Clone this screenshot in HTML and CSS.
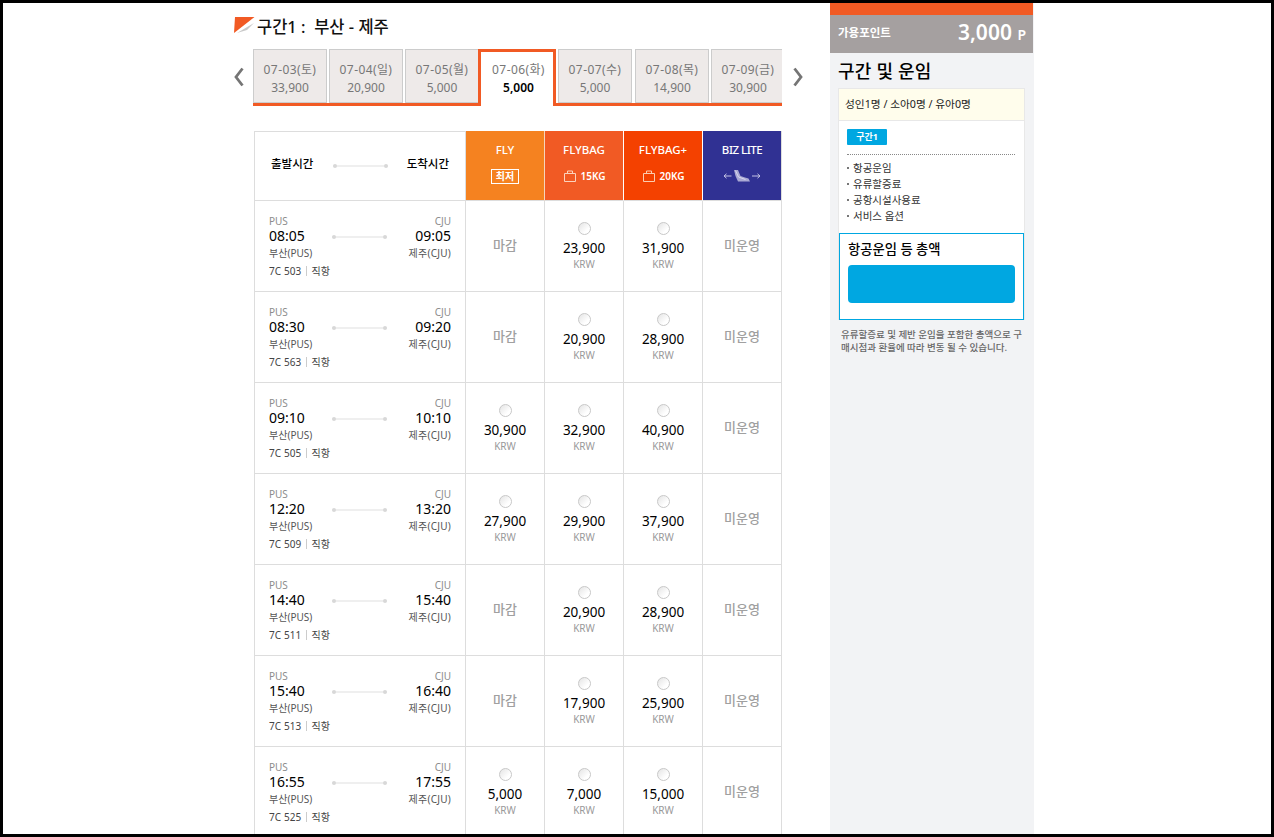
FILE: index.html
```html
<!DOCTYPE html>
<html lang="ko">
<head>
<meta charset="utf-8">
<title>구간 선택</title>
<link rel="stylesheet" href="styles.css">
</head>
<body>
<div class="page">
  <main class="main">
    <h2 class="title">
      <svg class="flag" width="21" height="17" viewBox="0 0 21 17"><polygon points="20,6 3,16 13,13" fill="#c9c9c9"/><polygon points="1,0 20.5,0 0,16" fill="#f15a24"/></svg>
      <span class="title-text">구간1 :  부산 - 제주</span>
    </h2>
    <div class="date-row">
      <svg class="arrow" width="10" height="20" viewBox="0 0 10 20"><path d="M8.5 1.5 2 10l6.500 8.500" fill="none" stroke="#757575" stroke-width="2.800"/></svg>
      <div class="tabs">
        <div class="tab"><span class="date">07-03(토)</span><span>33,900</span></div>
        <div class="tab"><span class="date">07-04(일)</span><span>20,900</span></div>
        <div class="tab"><span class="date">07-05(월)</span><span>5,000</span></div>
        <div class="tab active"><span class="date">07-06(화)</span><b>5,000</b></div>
        <div class="tab"><span class="date">07-07(수)</span><span>5,000</span></div>
        <div class="tab shifted"><span class="date">07-08(목)</span><span>14,900</span></div>
        <div class="tab"><span class="date">07-09(금)</span><span>30,900</span></div>
      </div>
      <svg class="arrow next" width="10" height="20" viewBox="0 0 10 20"><path d="M1.500 1.500 8 10l-6.500 8.500" fill="none" stroke="#757575" stroke-width="2.800"/></svg>
    </div>
    <table class="flights">
      <colgroup><col class="c-flight"><col class="c-fare"><col class="c-fare"><col class="c-fare"><col class="c-fare"></colgroup>
      <thead>
        <tr>
          <th class="head-time"><div class="head-time-in"><span>출발시간</span><i class="line"></i><span>도착시간</span></div></th>
          <th class="fly"><div class="fare-name">FLY</div><div class="fare-sub"><span class="lowest">최저</span></div></th>
          <th class="flybag"><div class="fare-name">FLYBAG</div><div class="fare-sub"><svg class="bag" width="12" height="12" viewBox="0 0 12 12"><path d="M.5 3.500h11v8H.5zM3.500 3.500V1h5v2.500" fill="none" stroke="#fbd3bd"/></svg>15KG</div></th>
          <th class="flybagplus"><div class="fare-name">FLYBAG+</div><div class="fare-sub"><svg class="bag" width="12" height="12" viewBox="0 0 12 12"><path d="M.5 3.500h11v8H.5zM3.500 3.500V1h5v2.500" fill="none" stroke="#fbcdb0"/></svg>20KG</div></th>
          <th class="biz"><div class="fare-name biz-name">BIZ LITE</div><div class="fare-sub"><svg width="38" height="14" viewBox="0 0 38 14"><path d="M1 7h7.500M1 7l2.500-2.200M1 7l2.500 2.200M29 7h8M37 7l-2.500-2.200M37 7l-2.500 2.200" fill="none" stroke="#c3c3e4"/><path d="M11 1h4l2.500 6 4.500 1.500 3.500 1 1.500 3H15l-2.500-5.500z" fill="#a9a9d4"/><path d="M12.500 1.500 15.500 8l7 2.500" fill="none" stroke="#d8d8ee"/></svg></div></th>
        </tr>
      </thead>
      <tbody>
        <tr>
          <td><div class="flight"><span class="code">PUS</span><span></span><span class="code r">CJU</span><span class="time">08:05</span><i class="line"></i><span class="time r">09:05</span><span class="city">부산(PUS)</span><span></span><span class="city r">제주(CJU)</span></div><div class="no">7C 503<i></i>직항</div></td>
          <td class="na">마감</td>
          <td class="fare"><i class="radio"></i><div class="price">23,900</div><div class="cur">KRW</div></td>
          <td class="fare"><i class="radio"></i><div class="price">31,900</div><div class="cur">KRW</div></td>
          <td class="na">미운영</td>
        </tr>
        <tr>
          <td><div class="flight"><span class="code">PUS</span><span></span><span class="code r">CJU</span><span class="time">08:30</span><i class="line"></i><span class="time r">09:20</span><span class="city">부산(PUS)</span><span></span><span class="city r">제주(CJU)</span></div><div class="no">7C 563<i></i>직항</div></td>
          <td class="na">마감</td>
          <td class="fare"><i class="radio"></i><div class="price">20,900</div><div class="cur">KRW</div></td>
          <td class="fare"><i class="radio"></i><div class="price">28,900</div><div class="cur">KRW</div></td>
          <td class="na">미운영</td>
        </tr>
        <tr>
          <td><div class="flight"><span class="code">PUS</span><span></span><span class="code r">CJU</span><span class="time">09:10</span><i class="line"></i><span class="time r">10:10</span><span class="city">부산(PUS)</span><span></span><span class="city r">제주(CJU)</span></div><div class="no">7C 505<i></i>직항</div></td>
          <td class="fare"><i class="radio"></i><div class="price">30,900</div><div class="cur">KRW</div></td>
          <td class="fare"><i class="radio"></i><div class="price">32,900</div><div class="cur">KRW</div></td>
          <td class="fare"><i class="radio"></i><div class="price">40,900</div><div class="cur">KRW</div></td>
          <td class="na">미운영</td>
        </tr>
        <tr>
          <td><div class="flight"><span class="code">PUS</span><span></span><span class="code r">CJU</span><span class="time">12:20</span><i class="line"></i><span class="time r">13:20</span><span class="city">부산(PUS)</span><span></span><span class="city r">제주(CJU)</span></div><div class="no">7C 509<i></i>직항</div></td>
          <td class="fare"><i class="radio"></i><div class="price">27,900</div><div class="cur">KRW</div></td>
          <td class="fare"><i class="radio"></i><div class="price">29,900</div><div class="cur">KRW</div></td>
          <td class="fare"><i class="radio"></i><div class="price">37,900</div><div class="cur">KRW</div></td>
          <td class="na">미운영</td>
        </tr>
        <tr>
          <td><div class="flight"><span class="code">PUS</span><span></span><span class="code r">CJU</span><span class="time">14:40</span><i class="line"></i><span class="time r">15:40</span><span class="city">부산(PUS)</span><span></span><span class="city r">제주(CJU)</span></div><div class="no">7C 511<i></i>직항</div></td>
          <td class="na">마감</td>
          <td class="fare"><i class="radio"></i><div class="price">20,900</div><div class="cur">KRW</div></td>
          <td class="fare"><i class="radio"></i><div class="price">28,900</div><div class="cur">KRW</div></td>
          <td class="na">미운영</td>
        </tr>
        <tr>
          <td><div class="flight"><span class="code">PUS</span><span></span><span class="code r">CJU</span><span class="time">15:40</span><i class="line"></i><span class="time r">16:40</span><span class="city">부산(PUS)</span><span></span><span class="city r">제주(CJU)</span></div><div class="no">7C 513<i></i>직항</div></td>
          <td class="na">마감</td>
          <td class="fare"><i class="radio"></i><div class="price">17,900</div><div class="cur">KRW</div></td>
          <td class="fare"><i class="radio"></i><div class="price">25,900</div><div class="cur">KRW</div></td>
          <td class="na">미운영</td>
        </tr>
        <tr>
          <td><div class="flight"><span class="code">PUS</span><span></span><span class="code r">CJU</span><span class="time">16:55</span><i class="line"></i><span class="time r">17:55</span><span class="city">부산(PUS)</span><span></span><span class="city r">제주(CJU)</span></div><div class="no">7C 525<i></i>직항</div></td>
          <td class="fare"><i class="radio"></i><div class="price">5,000</div><div class="cur">KRW</div></td>
          <td class="fare"><i class="radio"></i><div class="price">7,000</div><div class="cur">KRW</div></td>
          <td class="fare"><i class="radio"></i><div class="price">15,000</div><div class="cur">KRW</div></td>
          <td class="na">미운영</td>
        </tr>
      </tbody>
    </table>
  </main>
  <aside class="side">
    <div class="side-top"></div>
    <div class="points"><span class="points-label">가용포인트</span><span class="points-value">3,000 <small>P</small></span></div>
    <h3 class="side-title">구간 및 운임</h3>
    <div class="summary">
      <div class="pax">성인1명 / 소아0명 / 유아0명</div>
      <div class="detail">
        <span class="badge">구간1</span>
        <ul class="items">
          <li>항공운임</li>
          <li>유류할증료</li>
          <li>공항시설사용료</li>
          <li>서비스 옵션</li>
        </ul>
      </div>
      <div class="total">
        <div class="total-label">항공운임 등 총액</div>
        <div class="total-bar"></div>
      </div>
    </div>
    <p class="note">유류할증료 및 제반 운임을 포함한 총액으로 구매시점과 환율에 따라 변동 될 수 있습니다.</p>
  </aside>
</div>
</body>
</html>
```

FILE: styles.css
```css
* { box-sizing: border-box; }
html, body { margin: 0; padding: 0; background: #fff; }
body { font-family: "Noto Sans", "Noto Sans CJK KR", sans-serif; color: #000; }
i { font-style: normal; }

.page {
  width: 1274px;
  height: 837px;
  border: 3px solid #000;
  padding-left: 231px;
  display: flex;
  overflow: hidden;
  background: #fff;
}
.main { width: 596px; flex: none; }

.title {
  margin: 0;
  padding-top: 12px;
  height: 36px;
  display: flex;
  align-items: center;
  font-size: 16.500px;
  line-height: 24px;
  font-weight: 500;
  color: #111;
}
.title-text { white-space: pre; }
.flag { margin: -4px 2px 0 0; flex: none; }

.date-row {
  margin-top: 10px;
  display: flex;
  align-items: center;
  height: 57px;
}
.arrow { flex: none; display: block; margin-top: -2px; }
.arrow.next { margin-left: 11px; }
.tabs {
  margin-left: 9px;
  width: 529px;
  height: 57px;
  flex: none;
  display: flex;
  gap: 2px;
  align-items: flex-start;
  overflow: hidden;
  background: linear-gradient(#f15a24, #f15a24) left bottom / 100% 3px no-repeat;
}
.tab {
  flex: none;
  width: 74px;
  height: 54px;
  border: 1px solid #ccc;
  background: #eeeae9;
  display: flex;
  flex-direction: column;
  align-items: center;
  padding-top: 11px;
  font-size: 12px;
  line-height: 18px;
  color: #777;
}
.date { letter-spacing: .4px; }
.tab.active {
  width: 78px;
  height: 57px;
  margin-left: -3px;
  border: 3px solid #f15a24;
  border-bottom: 0;
  background: #fff;
  padding: 9px 0 0 3px;
}
.tab.active b { color: #000; font-weight: 600; }
.tab.shifted { margin-left: 1px; }

.flights {
  margin: 25px 0 0 20px;
  width: 528px;
  table-layout: fixed;
  border-collapse: separate;
  border-spacing: 0;
}
.c-flight { width: 212px; }
.c-fare { width: 79px; }
.flights th, .flights td {
  padding: 0;
  border-right: 1px solid #ddd;
  border-bottom: 1px solid #ddd;
}
.flights th {
  height: 70px;
  color: #fff;
  font-weight: 500;
  vertical-align: top;
  font-size: 11.500px;
}
.flights td { height: 91px; }
.flights tr > :first-child { border-left: 1px solid #ddd; }
.flights th.head-time { border-top: 1px solid #ddd; color: #000; vertical-align: middle; }
.head-time-in {
  display: flex;
  align-items: center;
  justify-content: space-between;
  padding: 0 16px 5px 16px;
  font-size: 11.500px;
  line-height: 16px;
}
.head-time-in .line { margin-top: 4px; }
.fly { background: #f58220; }
.flybag { background: #f15a24; }
.flybagplus { background: #f44100; }
.biz { background: #303193; }
.flights th.fly, .flights th.flybag, .flights th.flybagplus { border-right-color: #fff; }
.flights th.fly { border-right-color: #f5d5bd; }
.flights th.biz { border-right-color: #ddd; }
.fare-name { line-height: 16px; padding-top: 11px; }
.biz-name { letter-spacing: -.5px; }
.flybag .fare-sub, .flybagplus .fare-sub { padding-left: 1px; }
.fare-sub {
  margin-top: 10px;
  height: 16px;
  display: flex;
  align-items: center;
  justify-content: center;
  font-size: 10px;
  font-weight: 600;
}
.bag { margin-right: 5px; }
.lowest {
  display: block;
  width: 28px;
  height: 15px;
  border: 1px solid #fff;
  line-height: 13px;
  font-size: 10px;
  font-weight: 600;
}

.line {
  display: block;
  position: relative;
  width: 55px;
  height: 2px;
  background: #efefef;
}
.line::before, .line::after {
  content: "";
  position: absolute;
  top: -1px;
  width: 4px;
  height: 4px;
  border-radius: 50%;
  background: #d8d8d8;
}
.line::before { left: 0; }
.line::after { right: 0; }

.flights td:first-child { vertical-align: top; padding: 13px 14px 0; }
.flight {
  display: grid;
  grid-template-columns: 63px 55px 64px;
  align-items: center;
}
.flight .line { margin-top: 2px; }
.code { font-size: 10px; line-height: 14px; color: #8c8c8c; }
.time { font-size: 14px; line-height: 16px; color: #000; }
.city { font-size: 10px; line-height: 16px; color: #555; margin-top: 1px; white-space: nowrap; }
.city.r { letter-spacing: .25px; }
.r { text-align: right; }
.no {
  margin-top: 3px;
  display: flex;
  align-items: center;
  font-size: 10px;
  line-height: 14px;
  color: #444;
  letter-spacing: .1px;
}
.no i { width: 1px; height: 10px; background: #ccc; margin: 0 4px 0 5px; }

.flights td.na {
  text-align: center;
  vertical-align: middle;
  padding-bottom: 4px;
  font-size: 13px;
  font-weight: 500;
  color: #a0a0a0;
}
.flights td.fare { text-align: center; vertical-align: top; padding-top: 21px; }
.radio {
  display: block;
  width: 13px;
  height: 13px;
  margin: 0 auto;
  border: 1px solid #c8c8c8;
  border-radius: 50%;
  background: linear-gradient(135deg, #e4e4e4, #fff 70%);
}
.price { margin-top: 4px; font-size: 13.500px; line-height: 18px; color: #000; }
.cur { font-size: 10px; line-height: 12px; color: #999; margin-top: 1px; }

.side {
  width: 204px;
  flex: none;
  background: #f2f3f5;
}
.side-top { height: 12px; width: 203px; background: #f15a24; }
.points {
  width: 203px;
  height: 38px;
  background: #a5a0a0;
  display: flex;
  align-items: center;
  justify-content: space-between;
  padding: 0 7px 0 8px;
  color: #fff;
}
.points-label { font-size: 11.500px; font-weight: 600; margin-top: -5px; }
.points-value { font-size: 21px; font-weight: 600; line-height: 24px; margin-top: -2px; }
.points-value small { font-size: 14px; }
.side-title {
  margin: 6px 0 0 8px;
  font-size: 18px;
  line-height: 24px;
  font-weight: 500;
  letter-spacing: .2px;
}
.summary {
  margin: 5px 0 0 8px;
  width: 187px;
  border: 1px solid #e8e8e8;
  background: #fff;
}
.pax {
  height: 32px;
  background: #fffdec;
  border-bottom: 1px solid #e8e8e8;
  padding-left: 6px;
  font-size: 10.700px;
  line-height: 31px;
  color: #222;
}
.detail { padding: 8px 8px 0; height: 112px; }
.badge {
  display: block;
  width: 40px;
  height: 16px;
  border-radius: 1px;
  background: #00a7e1;
  color: #fff;
  text-align: center;
  font-size: 9px;
  font-weight: 700;
  line-height: 16px;
}
.items {
  list-style: none;
  margin: 9px 1px 0 0;
  padding: 5px 0 0;
  border-top: 1px dotted #888;
}
.items li {
  position: relative;
  padding-left: 6px;
  font-size: 10.500px;
  line-height: 16px;
  color: #333;
}
.items li::before {
  content: "";
  position: absolute;
  left: 0;
  top: 7px;
  width: 2px;
  height: 2px;
  background: #777;
}
.total {
  height: 87px;
  border: 1px solid #00a7e1;
  padding: 5px 8px 0 8px;
  margin-bottom: -1px;
}
.total-label { font-size: 13.300px; line-height: 20px; font-weight: 500; }
.total-bar { margin-top: 6px; height: 38px; border-radius: 4px; background: #00a7e1; }
.note {
  margin: 8px 10px 0 11px;
  font-size: 9.500px;
  line-height: 13px;
  color: #666;
  font-weight: 500;
  word-break: break-all;
}
```
